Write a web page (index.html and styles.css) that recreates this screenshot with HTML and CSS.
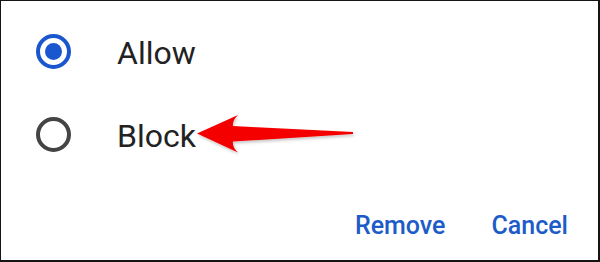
FILE: index.html
```html
<!DOCTYPE html>
<html>
<head>
<meta charset="utf-8">
<link rel="stylesheet" href="styles.css">
</head>
<body>
<div class="dialog">
  <div class="options">
    <div class="option">
      <span class="radio checked"></span>
      <span class="label">Allow</span>
    </div>
    <div class="option">
      <span class="radio"></span>
      <span class="label">Block</span>
    </div>
  </div>
  <div class="actions">
    <span class="btn">Remove</span>
    <span class="btn">Cancel</span>
  </div>
  <svg class="arrow" width="600" height="262" viewBox="0 0 600 262">
    <defs>
      <filter id="sh" x="-10%" y="-50%" width="130%" height="200%">
        <feDropShadow dx="1" dy="2" stdDeviation="1.5" flood-color="#000" flood-opacity="0.22"/>
      </filter>
    </defs>
    <path d="M197,133.5 L238,115 Q232,121 233,126 L353,132 L353,134 L233,141.5 Q232,147 238,152.5 Z" fill="#f50000" filter="url(#sh)"/>
  </svg>
</div>
</body>
</html>
```

FILE: styles.css
```css
html, body {
  margin: 0;
  padding: 0;
  background: #fff;
}

.dialog {
  position: relative;
  box-sizing: border-box;
  width: 600px;
  height: 262px;
  border: 1px solid #141414;
  border-right-width: 2px;
  border-bottom-width: 2px;
  display: flex;
  flex-direction: column;
  font-family: Roboto, "Liberation Sans", sans-serif;
  background: #fff;
}

.options {
  padding-top: 9px;
  padding-left: 34.5px;
}

.option {
  height: 83px;
  display: flex;
  align-items: center;
}

.radio {
  box-sizing: border-box;
  width: 35px;
  height: 35px;
  border-radius: 50%;
  border: 4px solid #444444;
  display: flex;
  align-items: center;
  justify-content: center;
  flex: none;
}

.radio.checked {
  border-color: #1a57cf;
}

.radio.checked::after {
  content: "";
  width: 17px;
  height: 17px;
  border-radius: 50%;
  background: #1a57cf;
}

.label {
  margin-left: 46.5px;
  font-size: 32px;
  line-height: 1;
  padding-top: 3px;
  color: #222222;
}

.actions {
  margin-top: auto;
  display: flex;
  justify-content: flex-end;
  gap: 46px;
  padding-right: 30px;
  padding-bottom: 22px;
}

.btn {
  font-size: 25px;
  font-weight: 500;
  line-height: 1;
  color: #1d5bc8;
}

.arrow {
  position: absolute;
  left: -1px;
  top: -1px;
  pointer-events: none;
}
```
